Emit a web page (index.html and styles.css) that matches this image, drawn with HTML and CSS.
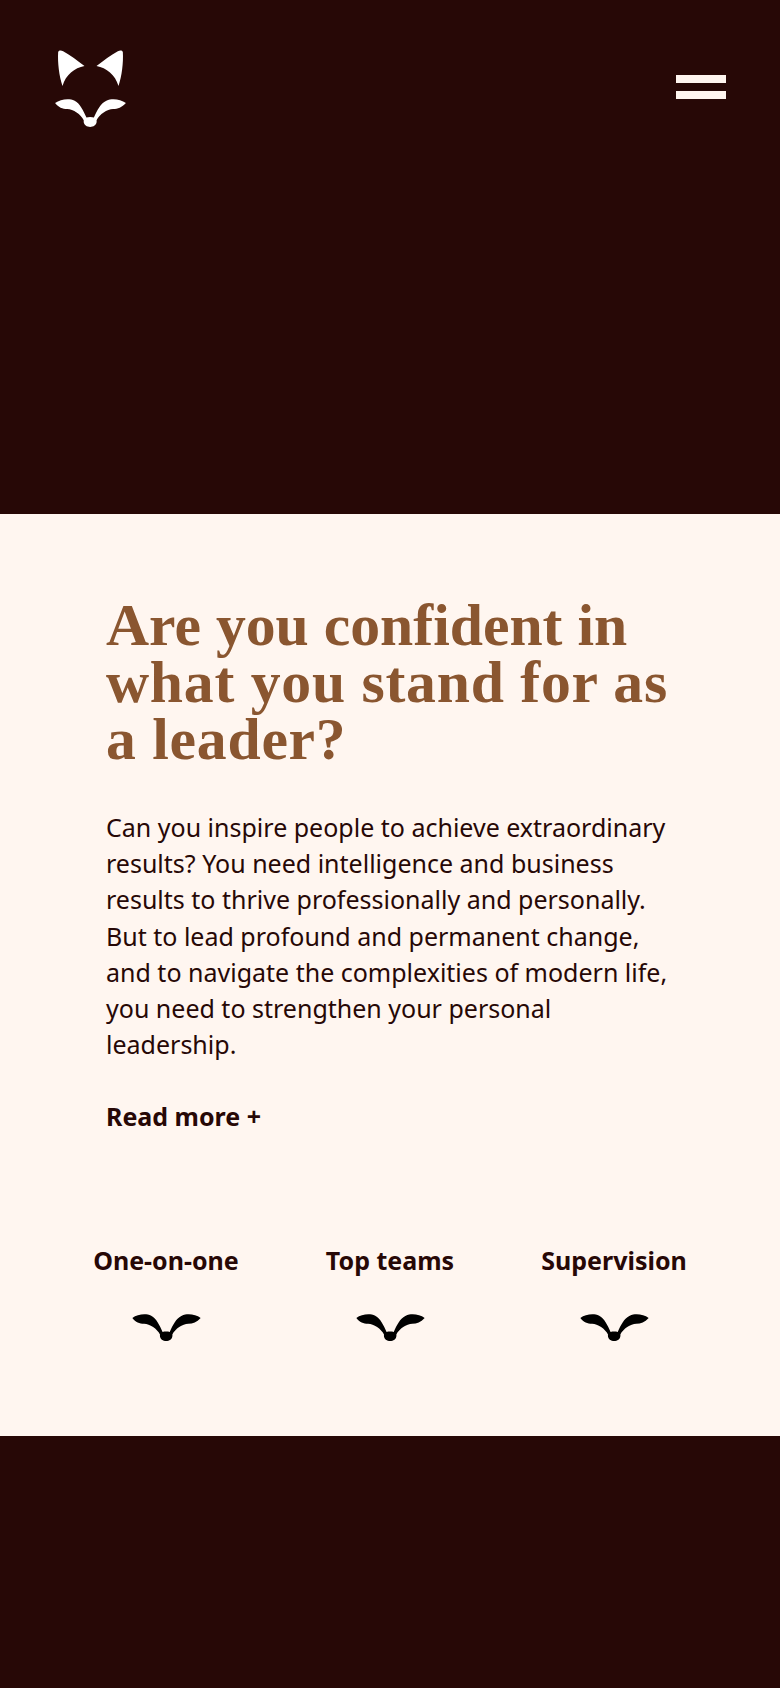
FILE: index.html
```html
<!DOCTYPE html>
<html lang="en">
<head>
  <meta charset="UTF-8">
  <title>Are you confident in what you stand for as a leader?</title>
  <link rel="stylesheet" href="styles.css">
</head>
<body>
  <svg class="defs" width="0" height="0">
    <symbol id="wings" viewBox="18 17 210 83">
      <path d="M18 29 C34 18 58 14 76 22 C92 30 102 52 111 72 C117 70 127 70 133 72 C142 52 152 30 170 22 C188 14 212 18 228 29 C216 42 204 47 190 47 C172 48 150 62 141 80 C143 94 132 100 122 100 C112 100 101 94 103 80 C94 62 72 48 54 47 C40 47 28 42 18 29 Z"/>
    </symbol>
  </svg>

  <header class="hero">
    <a class="logo" href="#">
      <svg class="logo-ears" viewBox="20 12 200 108">
        <path d="M23 18 C26 12 32 13 38 16 C60 28 80 44 102 60 C72 66 46 86 36 120 C26 90 21 50 23 18 Z"/>
        <path d="M217 18 C214 12 208 13 202 16 C180 28 160 44 138 60 C168 66 194 86 204 120 C214 90 219 50 217 18 Z"/>
      </svg>
      <svg class="logo-wings"><use href="#wings"/></svg>
    </a>
    <button class="burger" type="button"><span></span><span></span></button>
  </header>

  <main class="intro">
    <h1>Are you confident in what you stand for as a leader?</h1>
    <p>Can you inspire people to achieve extraordinary results? You need intelligence and business results to thrive professionally and personally. But to lead profound and permanent change, and to navigate the complexities of modern life, you need to strengthen your personal leadership.</p>
    <a class="more" href="#">Read more +</a>

    <div class="services">
      <a href="#">One-on-one<svg><use href="#wings"/></svg></a>
      <a href="#">Top teams<svg><use href="#wings"/></svg></a>
      <a href="#">Supervision<svg><use href="#wings"/></svg></a>
    </div>
  </main>

  <footer class="bottom"></footer>
</body>
</html>
```

FILE: styles.css
```css
body {
  margin: 0;
  background: #270806;
  font-family: "Noto Sans", sans-serif;
  color: #270806;
}
a {
  color: inherit;
  text-decoration: none;
}
.defs {
  display: block;
  height: 0;
}
.hero {
  height: 514px;
  box-sizing: border-box;
  padding: 50px 54px 0 54px;
  display: flex;
  justify-content: space-between;
  align-items: flex-start;
}
.logo {
  display: flex;
  flex-direction: column;
  align-items: center;
  width: 73px;
}
.logo svg {
  display: block;
  fill: #fff;
}
.logo-ears {
  width: 67px;
  height: 36px;
}
.logo-wings {
  width: 73px;
  height: 28px;
  margin-top: 13px;
}
.burger {
  display: flex;
  flex-direction: column;
  gap: 8px;
  width: 50px;
  margin-top: 25px;
  padding: 0;
  background: none;
  border: 0;
}
.burger span {
  display: block;
  height: 8px;
  background: #fff5ef;
}
.intro {
  height: 922px;
  box-sizing: border-box;
  padding: 83px 54px 0 54px;
  background: #fff6f0;
}
.intro h1 {
  margin: 0 52px 0 52px;
  font-family: "Liberation Serif", serif;
  font-size: 59.7px;
  line-height: 57px;
  font-weight: 700;
  letter-spacing: 0.75px;
  color: #8a5630;
}
.intro h1::first-line {
  letter-spacing: 0;
}
.intro p {
  margin: 41px 52px 0 52px;
  font-size: 25px;
  line-height: 36.2px;
}
.more {
  display: block;
  margin: 36px 52px 0 52px;
  font-size: 25px;
  line-height: 36px;
  font-weight: 700;
}
.services {
  display: grid;
  grid-template-columns: repeat(3, 224px);
  margin-top: 108px;
}
.services a {
  display: flex;
  flex-direction: column;
  align-items: center;
  font-size: 25px;
  line-height: 36px;
  font-weight: 700;
}
.services svg {
  display: block;
  width: 69px;
  height: 27px;
  margin-top: 36px;
  fill: #000;
}
.bottom {
  height: 252px;
}
```
